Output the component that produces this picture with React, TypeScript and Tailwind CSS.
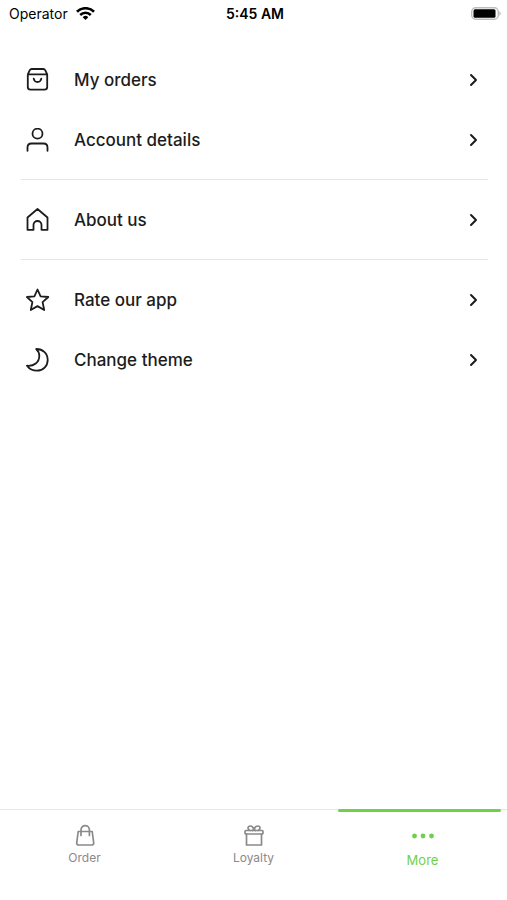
import type { ReactNode } from "react";

interface MenuEntry {
  label: string;
  icon: ReactNode;
}

interface TabEntry {
  label: string;
  icon: ReactNode;
  active?: boolean;
}

const menuIcon = (children: ReactNode) => (
  <svg
    className="h-6 w-6 shrink-0"
    viewBox="0 0 24 24"
    fill="none"
    stroke="currentColor"
    strokeWidth="1.8"
    strokeLinecap="round"
    strokeLinejoin="round"
    aria-hidden="true"
  >
    {children}
  </svg>
);

const tabIcon = (children: ReactNode) => (
  <svg
    className="h-6 w-6"
    viewBox="0 0 24 24"
    fill="none"
    stroke="currentColor"
    strokeWidth="1.7"
    strokeLinecap="round"
    strokeLinejoin="round"
    aria-hidden="true"
  >
    {children}
  </svg>
);

const sections: MenuEntry[][] = [
  [
    {
      label: "My orders",
      icon: menuIcon(
        <>
          <path d="M1.800 6.300 3.800 2.200C4.200 1.400 4.800 1 5.700 1h11.600c.9 0 1.500.4 1.900 1.200l2 4.100V19a2.700 2.700 0 0 1-2.700 2.700h-14A2.700 2.700 0 0 1 1.800 19V6.300h19.400" />
          <path d="M7.700 10.600c.4 2 1.900 3.400 3.800 3.400s3.400-1.400 3.800-3.400" />
        </>
      ),
    },
    {
      label: "Account details",
      icon: menuIcon(
        <>
          <circle cx="11.5" cy="5.700" r="5" />
          <path d="M1.500 22.800v-3.300c0-2.300 1.700-4 4-4h12c2.300 0 4 1.700 4 4v3.300" />
        </>
      ),
    },
  ],
  [
    {
      label: "About us",
      icon: menuIcon(
        <path d="M1.500 9.500 11.500 1l10 8.500v12.300h-6v-4.800a4 4 0 0 0-8 0v4.800h-6z" />
      ),
    },
  ],
  [
    {
      label: "Rate our app",
      icon: menuIcon(
        <path d="m11.500 1.500 3.100 6.800 7.700.7-5.700 5.100 1.600 7.900-6.700-3.900L4.800 22l1.600-7.900L.9 9l7.500-.7z" />
      ),
    },
    {
      label: "Change theme",
      icon: menuIcon(
        <path d="M10.200 1C16.400.8 21.700 5.400 21.700 11.900c0 6-4.600 10.800-10.700 10.800-4.200 0-7.700-1.800-10-5 6.900.8 12.300-3.500 12.300-9.700 0-2.700-1.100-5.200-3.100-7z" />
      ),
    },
  ],
];

const tabs: TabEntry[] = [
  {
    label: "Order",
    icon: tabIcon(
      <>
        <path d="M5.200 7.500h14l1.500 11.300c.2 1.300-.7 2.200-2 2.200h-13c-1.300 0-2.200-.9-2-2.200z" />
        <path d="M8 11.500V5.800a4.200 4.200 0 0 1 8.400 0v5.700" />
      </>
    ),
  },
  {
    label: "Loyalty",
    icon: tabIcon(
      <>
        <rect x="3" y="6.500" width="18" height="3.500" rx="1" />
        <path d="M4.500 10v11h15V10" />
        <path d="M12 5.500c-.7-2-1.900-3.500-3.700-3.500C6.900 2 6 2.900 6 4s.7 2 2 2.500M12 5.500c.7-2 1.900-3.500 3.700-3.500C17.100 2 18 2.900 18 4s-.7 2-2 2.500M12 5.500 10.500 6.500M12 5.500l1.500 1" />
      </>
    ),
  },
  {
    label: "More",
    active: true,
    icon: (
      <svg className="h-6 w-6" viewBox="0 0 24 24" fill="currentColor" aria-hidden="true">
        <circle cx="3.500" cy="12" r="2.400" />
        <circle cx="12" cy="12" r="2.400" />
        <circle cx="20.500" cy="12" r="2.400" />
      </svg>
    ),
  },
];

const StatusBar = () => (
  <header className="grid h-7 grid-cols-3 items-center pr-1.5 pl-[9px] text-black">
    <div className="flex items-center gap-2 text-sm">
      <span>Operator</span>
      <svg className="h-[14px] w-[19px]" viewBox="0 0 19 14" fill="none" stroke="currentColor" aria-hidden="true">
        <path d="M1 4.800a12 12 0 0 1 17 0" strokeWidth="2.700" />
        <path d="M4.200 8a7.500 7.500 0 0 1 10.600 0" strokeWidth="2.500" />
        <path d="m9.500 13-2.800-2.800a4 4 0 0 1 5.600 0z" fill="currentColor" stroke="none" />
      </svg>
    </div>
    <div className="text-center text-sm font-semibold">5:45 AM</div>
    <svg className="h-[14px] w-[30px] justify-self-end" viewBox="0 0 30 14" aria-hidden="true">
      <rect x="0.7" y="0.7" width="26.6" height="11.600" rx="4" fill="#fff" stroke="#bdbdbd" strokeWidth="1.400" />
      <rect x="2.500" y="2.300" width="22" height="8.400" rx="1.500" fill="#000" />
      <path d="M28.300 4.300c2 .8 2 3.600 0 4.400z" fill="#bdbdbd" />
    </svg>
  </header>
);

const MenuItem = ({ label, icon }: MenuEntry) => (
  <li>
    <button type="button" className="flex h-15 w-full items-center pr-1 pl-[5px] text-left">
      {icon}
      <span className="ml-6 flex-1 text-[17px] leading-6 font-medium">{label}</span>
      <svg
        className="h-5 w-5"
        viewBox="0 0 20 20"
        fill="none"
        stroke="currentColor"
        strokeWidth="2"
        strokeLinecap="round"
        strokeLinejoin="round"
        aria-hidden="true"
      >
        <path d="m7 5 5 5-5 5" />
      </svg>
    </button>
  </li>
);

const Tab = ({ label, icon, active }: TabEntry) => (
  <button
    type="button"
    aria-current={active ? "page" : undefined}
    className={
      active
        ? "flex flex-col items-center text-[#6fd14b]"
        : "flex flex-col items-center text-[#8a8a8a]"
    }
  >
    <span className={active ? "h-[3px] w-full pr-1.5" : "h-[3px] w-full"}>
      {active && <span className="block h-full rounded-xs bg-[#6fd14b]" />}
    </span>
    <span className="mt-3">{icon}</span>
    <span className={active ? "mt-0.5 text-[13px] leading-5" : "text-xs leading-5"}>{label}</span>
  </button>
);

function App() {
  return (
    <div className="flex min-h-screen flex-col bg-white font-[Inter,'Liberation_Sans',sans-serif] text-[#1c1c1c]">
      <StatusBar />
      <main className="mr-[19px] ml-[21px] flex-1 pt-3">
        {sections.map((section) => (
          <ul
            key={section[0].label}
            className="border-b border-[#e6e6e6] pt-2.5 pb-[9px] last:border-b-0"
          >
            {section.map((item) => (
              <MenuItem key={item.label} {...item} />
            ))}
          </ul>
        ))}
      </main>
      <nav className="border-t border-[#e6e6e6] pb-[30px]">
        <div className="-mt-px grid grid-cols-3">
          {tabs.map((tab) => (
            <Tab key={tab.label} {...tab} />
          ))}
        </div>
      </nav>
    </div>
  );
}

export default App;
